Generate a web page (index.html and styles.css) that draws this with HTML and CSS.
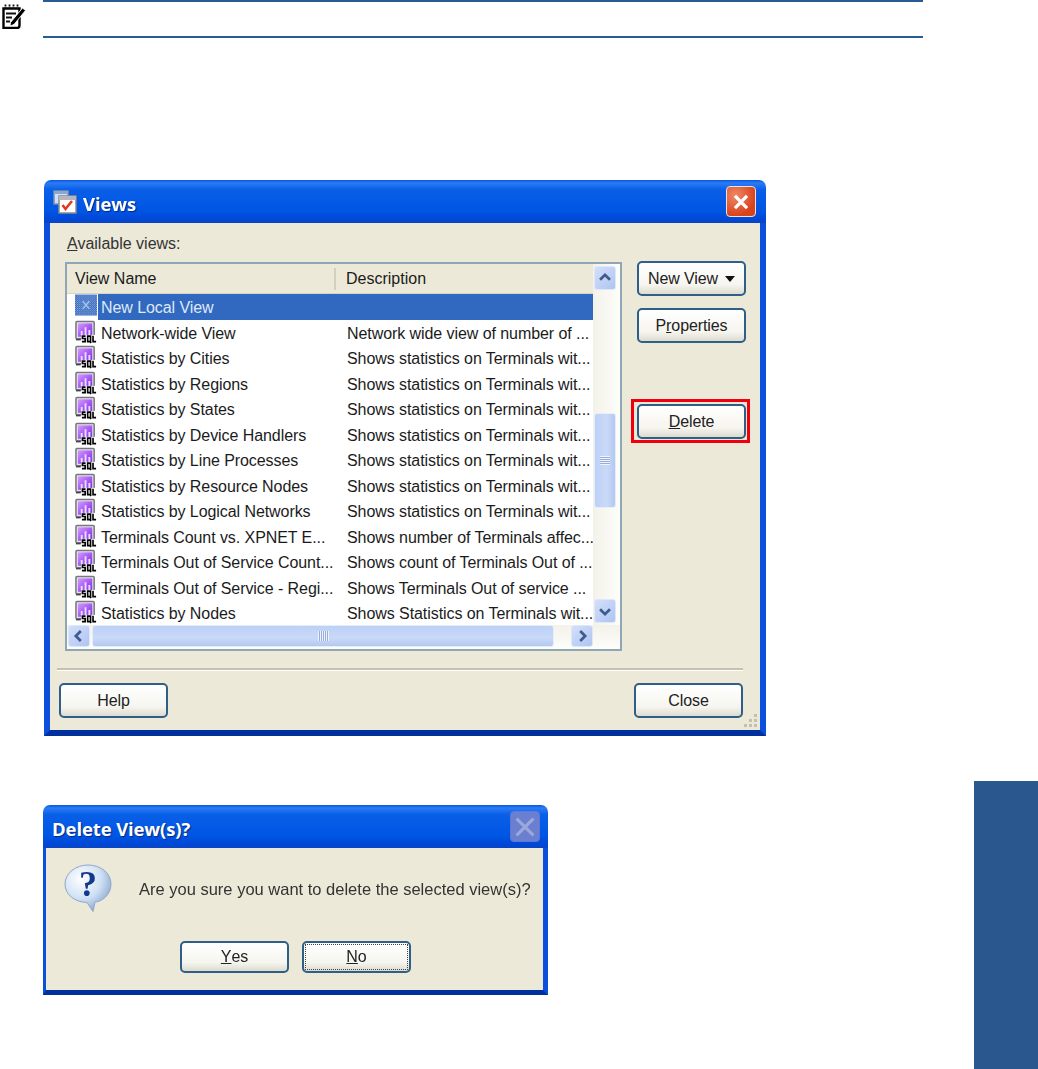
FILE: index.html
```html
<!DOCTYPE html>
<html lang="en">
<head>
<meta charset="utf-8">
<title>Views</title>
<link rel="stylesheet" href="styles.css">
</head>
<body>
<svg class="defs" width="0" height="0" aria-hidden="true">
  <defs>
    <linearGradient id="purple" x1="0" y1="0" x2="1" y2="1"><stop offset="0" stop-color="#d69aff"/><stop offset="1" stop-color="#7a22e8"/></linearGradient>
    <pattern id="dither" width="2" height="2" patternUnits="userSpaceOnUse"><rect width="2" height="2" fill="#2f62b8"/><rect width="1" height="1" fill="#8fb0e4"/><rect x="1" y="1" width="1" height="1" fill="#6f95d6"/></pattern>
    <symbol id="sql" viewBox="0 0 24 24">
      <rect x="1" y="1" width="19" height="18" rx="1" fill="#e4e4e4" stroke="#77777f" stroke-width="1.6"/>
      <rect x="3" y="3" width="15" height="14" fill="url(#purple)"/>
      <path d="M7 15V11M11 15V7M15 15V10" stroke="#eadcff" stroke-width="2"/>
      <rect x="6.500" y="15" width="17.500" height="8.500" fill="#fff"/>
      <path d="M1 20h5" stroke="#444" stroke-width="1.500"/>
      <path d="M11 16.300H7.800V18.800H10.600V22H7.200M13.200 16.300H16.200V22H13.200ZM15.200 21.500L16.800 23.500M18.800 16V22H22" fill="none" stroke="#000" stroke-width="1.700"/>
    </symbol>
    <symbol id="local" viewBox="0 0 24 24">
      <rect x="0" y="0" width="23" height="22" fill="url(#dither)"/>
      <path d="M8 7l7 8M15 7l-7 8" stroke="#a9c2ec" stroke-width="1.500"/>
    </symbol>
  </defs>
</svg>

<div class="note">
  <svg class="note-icon" viewBox="0 0 24 26" aria-hidden="true">
    <path d="M1.500 5.500H17.500V22.500Q17.500 25 15 25H1.500Z" fill="#fff" stroke="#000" stroke-width="2.400"/>
    <path d="M3.500 1.500v4.500M7.500 1.500v4.500M11.500 1.500v4.500M15.500 1.500v4.500" stroke="#111" stroke-width="1.800" stroke-dasharray="2 1"/>
    <path d="M4 10.500h10M4 14.500h6M4 18.500h4" stroke="#111" stroke-width="2.200"/>
    <path d="M8.500 19.500L20.500 5l3 2.500L12 21.500l-4 1.500Z" fill="#000" stroke="#fff" stroke-width=".9"/>
  </svg>
  <div class="note-rule"></div>
</div>

<section class="window views">
  <header class="titlebar">
    <svg class="title-icon" viewBox="0 0 24 24" aria-hidden="true">
      <rect x="1" y="1" width="14" height="13" fill="#cfe0f7" stroke="#7e8fa8" stroke-width="1.500"/>
      <rect x="1" y="1" width="14" height="3" fill="#8aa7d0"/>
      <rect x="6" y="6" width="17" height="17" fill="#fff" stroke="#8b8b8b" stroke-width="1.500"/>
      <rect x="6" y="6" width="17" height="4" fill="#b5b5c4"/>
      <path d="M9.500 15l3 4 6.500-8" fill="none" stroke="#e03a1c" stroke-width="2.500"/>
    </svg>
    <h1 class="title-text">Views</h1>
    <span class="close-btn">
      <svg viewBox="0 0 20 20" aria-hidden="true"><path d="M4.500 4.500l11 11M15.500 4.500l-11 11" stroke="#fff" stroke-width="3"/></svg>
    </span>
  </header>
  <div class="win-body">
    <div class="label"><u>A</u>vailable views:</div>
    <div class="main">
      <div class="listbox">
        <div class="list-top">
          <div class="list-area">
            <div class="list-header">
              <span class="col-name">View Name</span>
              <span class="col-desc">Description</span>
            </div>
            <div class="row selected"><svg class="row-icon"><use href="#local"/></svg><div class="cells"><span class="name">New Local View</span><span class="desc"></span></div></div>
            <div class="row"><svg class="row-icon"><use href="#sql"/></svg><div class="cells"><span class="name">Network-wide View</span><span class="desc">Network wide view of number of ...</span></div></div>
            <div class="row"><svg class="row-icon"><use href="#sql"/></svg><div class="cells"><span class="name">Statistics by Cities</span><span class="desc">Shows statistics on Terminals wit...</span></div></div>
            <div class="row"><svg class="row-icon"><use href="#sql"/></svg><div class="cells"><span class="name">Statistics by Regions</span><span class="desc">Shows statistics on Terminals wit...</span></div></div>
            <div class="row"><svg class="row-icon"><use href="#sql"/></svg><div class="cells"><span class="name">Statistics by States</span><span class="desc">Shows statistics on Terminals wit...</span></div></div>
            <div class="row"><svg class="row-icon"><use href="#sql"/></svg><div class="cells"><span class="name">Statistics by Device Handlers</span><span class="desc">Shows statistics on Terminals wit...</span></div></div>
            <div class="row"><svg class="row-icon"><use href="#sql"/></svg><div class="cells"><span class="name">Statistics by Line Processes</span><span class="desc">Shows statistics on Terminals wit...</span></div></div>
            <div class="row"><svg class="row-icon"><use href="#sql"/></svg><div class="cells"><span class="name">Statistics by Resource Nodes</span><span class="desc">Shows statistics on Terminals wit...</span></div></div>
            <div class="row"><svg class="row-icon"><use href="#sql"/></svg><div class="cells"><span class="name">Statistics by Logical Networks</span><span class="desc">Shows statistics on Terminals wit...</span></div></div>
            <div class="row"><svg class="row-icon"><use href="#sql"/></svg><div class="cells"><span class="name">Terminals Count vs. XPNET E...</span><span class="desc">Shows number of Terminals affec...</span></div></div>
            <div class="row"><svg class="row-icon"><use href="#sql"/></svg><div class="cells"><span class="name">Terminals Out of Service Count...</span><span class="desc">Shows count of Terminals Out of ...</span></div></div>
            <div class="row"><svg class="row-icon"><use href="#sql"/></svg><div class="cells"><span class="name">Terminals Out of Service - Regi...</span><span class="desc">Shows Terminals Out of service ...</span></div></div>
            <div class="row"><svg class="row-icon"><use href="#sql"/></svg><div class="cells"><span class="name">Statistics by Nodes</span><span class="desc">Shows Statistics on Terminals wit...</span></div></div>
          </div>
          <div class="vscroll">
            <span class="arrow"><svg viewBox="0 0 20 20" aria-hidden="true"><path d="M4.500 12L10 6.500 15.500 12" fill="none" stroke="#3f5a8c" stroke-width="3"/></svg></span>
            <span class="vthumb"><span class="vgrip"></span></span>
            <span class="arrow"><svg viewBox="0 0 20 20" aria-hidden="true"><path d="M4.500 8L10 13.500 15.500 8" fill="none" stroke="#3f5a8c" stroke-width="3"/></svg></span>
          </div>
        </div>
        <div class="hscroll">
          <span class="arrow"><svg viewBox="0 0 20 20" aria-hidden="true"><path d="M12 4.500L6.500 10 12 15.500" fill="none" stroke="#3f5a8c" stroke-width="3"/></svg></span>
          <span class="hthumb"><span class="hgrip"></span></span>
          <span class="arrow"><svg viewBox="0 0 20 20" aria-hidden="true"><path d="M8 4.500L13.500 10 8 15.500" fill="none" stroke="#3f5a8c" stroke-width="3"/></svg></span>
        </div>
      </div>
      <div class="side">
        <span class="btn">New View <span class="caret"></span></span>
        <span class="btn">P<u>r</u>operties</span>
        <div class="red-box"><span class="btn"><u>D</u>elete</span></div>
      </div>
    </div>
    <div class="separator"></div>
    <div class="footer">
      <span class="btn">Help</span>
      <span class="btn">Close</span>
    </div>
    <svg class="grip" viewBox="0 0 16 16" aria-hidden="true">
      <path d="M12 2h3v3h-3zM7 7h3v3H7zM12 7h3v3h-3zM2 12h3v3H2zM7 12h3v3H7zM12 12h3v3h-3z" fill="#c4c0ac"/>
    </svg>
  </div>
</section>

<section class="window confirm">
  <header class="titlebar">
    <h2 class="title-text">Delete View(s)?</h2>
    <span class="close-btn disabled">
      <svg viewBox="0 0 20 20" aria-hidden="true"><path d="M3.500 3.500l13 13M16.500 3.500l-13 13" stroke="#9aa8dc" stroke-width="2.400"/></svg>
    </span>
  </header>
  <div class="win-body">
    <div class="message">
      <svg class="q-icon" viewBox="0 0 50 50" aria-hidden="true">
        <defs>
          <radialGradient id="bubble" cx=".35" cy=".3" r=".8"><stop offset="0" stop-color="#fff"/><stop offset=".55" stop-color="#cfe0f4"/><stop offset="1" stop-color="#7d9cc8"/></radialGradient>
        </defs>
        <path d="M25 1C37 1 48 8.500 48 20S38 38 32 38L30 47.500 24 38.500C12 38 2 31 2 20S13 1 25 1Z" fill="url(#bubble)" stroke="#8ea6c8" stroke-width="1"/>
        <text class="q-mark" x="25" y="32" text-anchor="middle">?</text>
      </svg>
      <p class="message-text">Are you sure you want to delete the selected view(s)?</p>
    </div>
    <div class="choices">
      <span class="btn"><u>Y</u>es</span>
      <span class="btn focused"><span class="focus-ring"><u>N</u>o</span></span>
    </div>
  </div>
</section>

<div class="side-tab"></div>
</body>
</html>
```
FILE: styles.css
```css
* { box-sizing: border-box; }
html, body { margin: 0; padding: 0; background: #fff; }
body {
  width: 1038px;
  height: 1069px;
  position: relative;
  overflow: hidden;
  font-family: "Liberation Sans", Arial, sans-serif;
  color: #1b1b1b;
}
.defs { position: absolute; }

.note { display: flex; height: 38px; padding-left: 2px; gap: 17px; }
.note-icon { width: 24px; height: 26px; margin-top: 3px; flex: none; }
.note-rule { width: 880px; border-top: 2px solid #2a5a94; border-bottom: 2px solid #2a5a94; }

.window { filter: blur(.35px); overflow: hidden; border-radius: 7px 7px 0 0; }
.views { width: 722px; height: 556px; margin: 142px 0 0 44px; display: flex; flex-direction: column; }
.confirm { width: 505px; height: 190px; margin: 69px 0 0 43px; display: flex; flex-direction: column; }

.titlebar {
  height: 43px;
  flex: none;
  display: flex;
  align-items: center;
  padding: 0 9px;
  background: linear-gradient(#0a55e0 0, #2a7cf4 7%, #0a5fe8 22%, #0056e4 70%, #0048d8 90%, #0a44c4 100%);
}
.title-icon { width: 24px; height: 24px; margin-right: 6px; }
.title-text {
  margin: 0;
  padding-top: 3px;
  flex: 1;
  font: bold 18.5px "Open Sans", "Liberation Sans", sans-serif;
  letter-spacing: -.12px;
  color: #fff;
  text-shadow: 1px 1px 1px #0a2a80;
}
.close-btn {
  width: 30px;
  height: 31px;
  margin-right: 1px;
  border: 1px solid #f0e0dc;
  border-radius: 4px;
  background: radial-gradient(circle at 30% 30%, #ee8a68, #d8431c 70%);
  display: flex;
  align-items: center;
  justify-content: center;
}
.close-btn svg { width: 22px; height: 22px; }
.close-btn.disabled { background: #6a7fd0; border-color: #5f78d8; margin-right: -1px; }
.close-btn.disabled svg { width: 26px; height: 26px; }

.win-body {
  flex: 1;
  position: relative;
  background: #ece9d8;
  border: solid #0a50dc;
  border-width: 0 6px 6px 6px;
  border-bottom-color: #00309c;
  padding: 0 7px;
  display: flex;
  flex-direction: column;
}
.label { height: 39px; margin-left: 10px; padding-top: 12px; font-size: 16px; line-height: 18px; color: #333; }

.main { display: flex; margin-left: 8px; gap: 15px; }
.listbox {
  width: 557px;
  height: 389px;
  border: 2px solid #8fa6b4;
  background: #fff;
  display: flex;
  flex-direction: column;
}
.list-top { display: flex; height: 361px; }
.list-area { width: 527px; overflow: hidden; }
.list-header {
  height: 30px;
  display: flex;
  align-items: center;
  font-size: 16px;
  background: #ece9d8;
  border-bottom: 1px solid #d8d4c2;
}
.col-name { width: 269px; padding-left: 8px; border-right: 2px solid #d4d0c0; line-height: 22px; }
.col-desc { padding-left: 10px; }

.row { height: 25.5px; display: flex; padding-left: 8px; font-size: 16px; line-height: 27px; letter-spacing: -.07px; white-space: nowrap; }
.row-icon { width: 23px; height: 24px; flex: none; }
.cells { flex: 1; display: flex; padding-left: 3px; min-width: 0; }
.name { width: 246px; flex: none; overflow: hidden; }
.desc { flex: 1; overflow: hidden; }
.selected .cells { background: #3169c0; color: #dfe8f8; }

.vscroll {
  width: 27px;
  height: 361px;
  padding: 2px 4px 2px 1px;
  background: linear-gradient(90deg, #f3f2ea, #fdfdfa);
  display: flex;
  flex-direction: column;
  align-items: stretch;
}
.vscroll .arrow { height: 24px; }
.vthumb {
  width: 22px;
  height: 95px;
  margin-top: 123px;
  margin-bottom: auto;
  border: 1px solid #e6eefb;
  border-radius: 3px;
  background: linear-gradient(90deg, #bdd0f6, #c9d9f8 60%, #b4c8f0);
  display: flex;
  align-items: center;
  justify-content: center;
}
.vgrip { width: 10px; height: 9px; background: repeating-linear-gradient(#eef3fd 0 1px, #98addc 1px 2px); }

.arrow {
  display: flex;
  align-items: center;
  justify-content: center;
  width: 22px;
  height: 22px;
  flex: none;
  border: 1px solid #dfe8fa;
  border-radius: 3px;
  background: linear-gradient(135deg, #d4e0fa, #aec4f2);
}
.arrow svg { width: 18px; height: 18px; }

.hscroll {
  height: 24px;
  display: flex;
  align-items: center;
  padding: 0 27px 2px 1px;
  gap: 2px;
  background: linear-gradient(#f3f2ea, #fdfdfa);
}
.hthumb {
  flex: 1;
  height: 22px;
  margin-right: 15px;
  border: 1px solid #e6eefb;
  border-radius: 3px;
  background: linear-gradient(#bdd0f6, #c9d9f8 60%, #b4c8f0);
  display: flex;
  align-items: center;
  justify-content: center;
}
.hgrip { width: 11px; height: 10px; background: repeating-linear-gradient(90deg, #eef3fd 0 1px, #98addc 1px 2px); }

.side { display: flex; flex-direction: column; width: 109px; margin-top: -1px; gap: 12px; }
.btn {
  display: flex;
  align-items: center;
  justify-content: center;
  width: 109px;
  height: 35px;
  flex: none;
  border: 2px solid #2d5f88;
  border-radius: 5px;
  background: linear-gradient(#fff, #f6f5ef 70%, #dedbcf);
  font-size: 16px;
  letter-spacing: -.1px;
  color: #222;
  white-space: nowrap;
}
.caret {
  display: inline-block;
  width: 0;
  height: 0;
  margin-left: 7px;
  border: solid transparent;
  border-width: 6px 5px 0;
  border-top-color: #111;
}
.red-box { width: 119px; height: 44px; margin: 44px 0 0 -6px; padding: 2px 3px; border: 3px solid #f0000e; }

.separator { height: 3px; margin: 17px 10px 0 0; border-top: 2px solid #c5c2b0; border-bottom: 1px solid #fff; }
.footer { display: flex; justify-content: space-between; padding: 0 10px 0 2px; margin-top: 12px; }
.grip { position: absolute; right: 2px; bottom: 2px; width: 16px; height: 16px; }

.confirm .win-body { border-width: 0 5px 5px 3px; padding: 0; }
.message { display: flex; height: 93px; padding-left: 17px; }
.q-icon { width: 50px; height: 50px; margin-top: 16px; flex: none; }
.q-mark { font: bold 36px "Liberation Serif", serif; fill: #123a8c; }
.message-text { margin: 31px 0 0 26px; font-size: 16.5px; line-height: 20px; white-space: nowrap; color: #333; }
.choices { display: flex; gap: 13px; padding-left: 134px; }
.choices .btn { height: 32px; }
.focused { padding: 1px; }
.focus-ring { flex: 1; align-self: stretch; display: flex; align-items: center; justify-content: center; border: 1px dotted #444; }

.side-tab { position: absolute; left: 974px; top: 781px; width: 64px; height: 288px; background: #2a578e; }
```
